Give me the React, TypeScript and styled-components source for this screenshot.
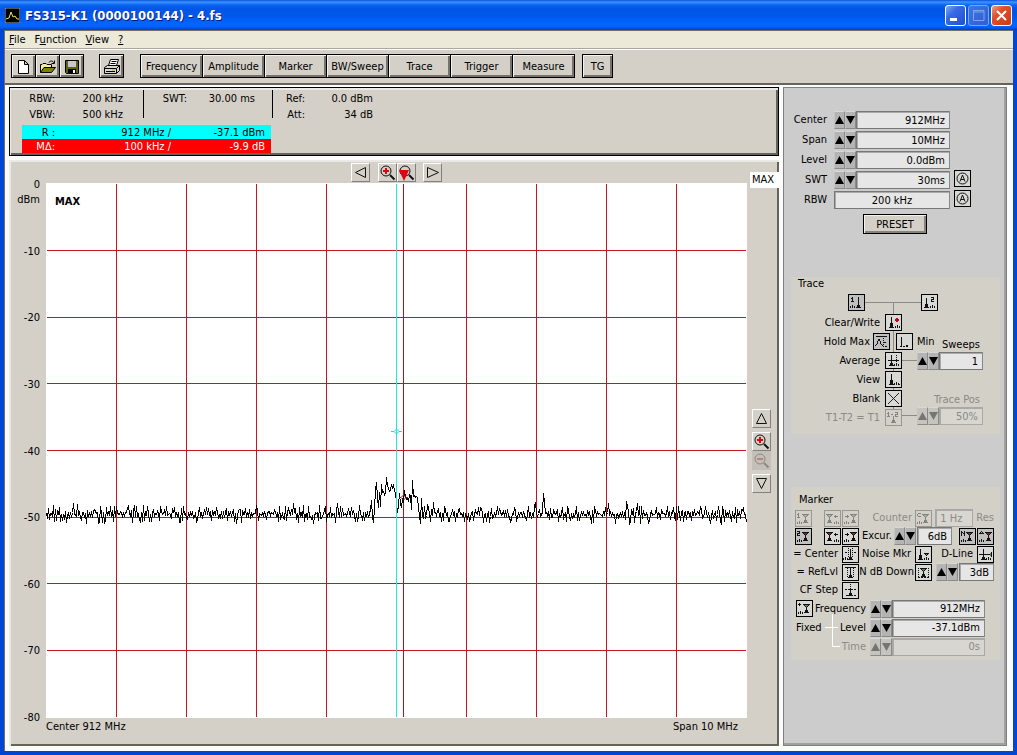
import React from "react";
import styled, { createGlobalStyle, css } from "styled-components";

const GlobalStyle = createGlobalStyle`
  * { box-sizing: border-box; }
  body { margin: 0; }
  body, button, input {
    font-family: "DejaVu Sans Condensed", Tahoma, "DejaVu Sans", sans-serif;
    font-size: 11px;
    line-height: 14px;
    color: #000;
  }
`;

const face = "#d4d0c8";

/* ---------- pixel icons ---------- */

const SPRITES: Record<string, string[]> = {
  peak: ["..#..", "..#..", "..#..", "..#..", ".###.", ".###.", "#####"],
  tall: [".#.", ".#.", ".#.", ".#.", ".#.", ".#.", "###", "###", "###"],
  mark: ["#######", ".#rrr#.", "..#r#..", "...#...", "...#...", "...#...", "..###..", "..###..", ".#####."],
  greenMark: ["#######", ".#ggg#.", "..#g#..", "...#...", "...#...", "...#...", "..###..", "..###..", ".#####."],
  floor: ["..#..", "#.#.#", "#.#.#"],
  one: [".#.", "##.", ".#.", ".#.", "###"],
  two: ["###", "..#", "###", "#..", "###"],
  left: [".#..", "####", ".#.."],
  right: ["..#.", "####", "..#."],
  n: ["#..#", "##.#", "#.##", "#..#", "#..#"],
  c: [".###", "#...", "#...", ".###"],
  delta: ["..#..", ".#.#.", "#####"],
  plus: [".#.", "###", ".#."],
  dot: [".rr.", "rrrr", "rrrr", ".rr."],
  gem: ["#####", ".#g#.", "..#.."],
  gemLeft: ["..#", ".g#", "#g#", ".g#", "..#"],
  bar: ["###########"],
  dash: ["##.##.##.##"],
  minus: ["##"],
  vline: ["#", "#", "#", "#", "#", "#", "#", "#", "#"],
  vdots: ["#", ".", "#", ".", "#", ".", "#", ".", "#"],
  hump: ["...##...", "...##...", "..#..#..", "..#..#..", "..#..#..", ".#....#.", "#......#"],
};

type Layer = [sprite: string, x: number, y: number];

const ICONS: Record<string, Layer[]> = {
  t1: [["one", 2, 2], ["peak", 7, 6], ["vline", 9, 2], ["floor", 1, 10]],
  t2: [["two", 9, 2], ["tall", 3, 3], ["peak", 2, 6], ["floor", 8, 10]],
  clear: [["tall", 4, 2], ["peak", 3, 6], ["dot", 9, 3], ["floor", 9, 10]],
  max: [["bar", 2, 2], ["hump", 1, 5], ["vdots", 9, 4], ["minus", 10, 8], ["minus", 11, 12]],
  min: [["vline", 4, 3], ["minus", 3, 12], ["minus", 9, 11], ["minus", 9, 12], ["minus", 6, 12]],
  avg: [["bar", 2, 7], ["peak", 3, 6], ["vdots", 10, 2], ["floor", 8, 10], ["vline", 5, 2]],
  view: [["tall", 4, 2], ["peak", 3, 6], ["floor", 8, 10], ["minus", 12, 12]],
  diff: [["one", 1, 2], ["minus", 5, 4], ["two", 9, 2], ["peak", 5, 6]],
  m1: [["one", 1, 2], ["greenMark", 6, 3], ["floor", 1, 10]],
  m2: [["two", 1, 2], ["mark", 6, 3], ["floor", 1, 10]],
  prevOff: [["greenMark", 1, 3], ["left", 9, 4], ["floor", 9, 10]],
  nextOff: [["greenMark", 7, 3], ["right", 2, 4], ["floor", 1, 10]],
  prev: [["mark", 1, 3], ["left", 9, 4], ["floor", 9, 10]],
  next: [["mark", 7, 3], ["right", 2, 4], ["floor", 1, 10]],
  count: [["c", 1, 2], ["greenMark", 6, 3], ["floor", 1, 10]],
  norm: [["n", 1, 2], ["mark", 6, 3], ["floor", 1, 10]],
  delta: [["delta", 1, 2], ["mark", 7, 3], ["floor", 1, 10]],
  center: [["peak", 5, 6], ["vline", 7, 2], ["minus", 2, 5], ["minus", 11, 5], ["vdots", 5, 1], ["vdots", 9, 1], ["floor", 0, 10]],
  noise: [["tall", 3, 2], ["peak", 2, 6], ["gem", 8, 6], ["floor", 8, 10]],
  dline: [["bar", 1, 7], ["peak", 3, 6], ["vline", 5, 2], ["gemLeft", 11, 5], ["floor", 8, 10]],
  ref: [["bar", 2, 2], ["vline", 7, 3], ["peak", 5, 6], ["vdots", 4, 3], ["vdots", 10, 3]],
  ndb: [["greenMark", 4, 3], ["vdots", 2, 3], ["vdots", 12, 3], ["dash", 2, 12]],
  step: [["peak", 5, 6], ["vdots", 7, 1], ["dash", 2, 6], ["minus", 3, 12], ["minus", 11, 12]],
  fixed: [["plus", 1, 2], ["greenMark", 6, 3], ["floor", 1, 10]],
};

const INK: Record<string, string> = { "#": "#111", r: "#c00020", g: "#20a050" };

function PixelIcon({ name }: { name: string }) {
  const paths: Record<string, string> = { "#": "", r: "", g: "" };
  ICONS[name].forEach(([sprite, ox, oy]) =>
    SPRITES[sprite].forEach((row, y) =>
      [...row].forEach((ch, x) => {
        if (ch !== ".") paths[ch] += `M${ox + x} ${oy + y}h1v1h-1z`;
      })
    )
  );
  return (
    <svg width="15" height="15" viewBox="0 0 15 15" shapeRendering="crispEdges" aria-hidden>
      {Object.keys(paths).map((k) => paths[k] && <path key={k} d={paths[k]} fill={INK[k]} />)}
    </svg>
  );
}

/* ---------- window frame ---------- */

const Window = styled.div`
  min-height: 100vh;
  display: flex;
  flex-direction: column;
  background: #0046d5;
`;

const TitleBar = styled.header`
  height: 30px;
  display: flex;
  align-items: center;
  gap: 5px;
  padding: 1px 5px 0;
  background: linear-gradient(#0a4fd8 0, #3d95ff 2px, #0a64f2 5px, #0055e5 9px, #0058ea 16px, #0066ff 24px, #0062f8 27px, #003ec0 30px);
`;

const Title = styled.h1`
  flex: 1;
  margin: 0;
  font-size: 13px;
  font-weight: bold;
  line-height: 16px;
  color: #fff;
  text-shadow: 1px 1px 0 #0a1883;
`;

const Caption = styled.div`
  display: flex;
  gap: 2px;
`;

const CaptionButton = styled.button<{ $kind: "min" | "max" | "close" }>`
  width: 21px;
  height: 21px;
  padding: 0;
  border: 1px solid ${(p) => (p.$kind === "max" ? "#7fa2ea" : "#fff")};
  border-radius: 3px;
  background: ${(p) =>
    p.$kind === "close"
      ? "linear-gradient(135deg, #f0a088, #e0502c 35%, #c83c14)"
      : p.$kind === "max"
      ? "linear-gradient(135deg, #3f76e4, #2a5fd8)"
      : "linear-gradient(135deg, #86a8f4, #3a6ae4 35%, #1f50d0)"};
  svg { display: block; }
`;

const Client = styled.div`
  flex: 1;
  display: flex;
  flex-direction: column;
  margin: 0 4px 4px;
  border-top: 1px solid #716f64;
  border-left: 1px solid #716f64;
  background: #fcfcfc;
`;

const MenuBar = styled.nav`
  display: flex;
  height: 18px;
  background: #ece9d8;
  border-bottom: 1px solid #aca899;
`;

const MenuItem = styled.button`
  padding: 1px 5px 0 4px;
  border: 0;
  background: none;
`;

const ToolBar = styled.div`
  display: flex;
  height: 36px;
  padding: 4px 6px;
  background: ${face};
  border-top: 1px solid #fff;
  border-bottom: 2px solid #66625c;
`;

const ToolGroup = styled.div<{ $gap: number }>`
  display: flex;
  margin-right: ${(p) => p.$gap}px;
`;

const ToolButton = styled.button<{ $width: number }>`
  width: ${(p) => p.$width}px;
  height: 24px;
  padding: 1px 0 0;
  border: 1px solid #000;
  background: ${face};
  box-shadow: inset 1px 1px 0 #f4f2ee, inset -2px -2px 0 #77736c;
  & + & { margin-left: -1px; }
  svg { display: block; margin: 0 auto; }
`;

/* ---------- main areas ---------- */

const Main = styled.main`
  flex: 1;
  display: flex;
  gap: 4px;
  padding: 2px 6px 5px 4px;
`;

const Work = styled.div`
  flex: 1;
  min-width: 0;
  display: flex;
  flex-direction: column;
  gap: 4px;
`;

const Info = styled.section`
  height: 69px;
  padding: 2px 12px 0;
  border: 1px solid #000;
  background: ${face};
  box-shadow: inset 1px 2px 0 #ebe9e5, inset -2px -2px 0 #66625c;
`;

const InfoCols = styled.div`
  display: flex;
  height: 35px;
`;

const InfoCol = styled.div<{ $label: number; $tail: number; $rule?: boolean }>`
  display: grid;
  grid-template-columns: ${(p) => p.$label}px 68px;
  grid-auto-rows: 16px;
  align-content: start;
  height: 28px;
  padding-right: ${(p) => p.$tail}px;
  border-right: ${(p) => (p.$rule ? "1px solid #000" : "0")};
  line-height: 17px;
  text-align: right;
  white-space: nowrap;
`;

const Readout = styled.div<{ $tone: "cyan" | "red" }>`
  display: grid;
  grid-template-columns: 33px 116px 94px;
  width: 249px;
  height: 14px;
  line-height: 15px;
  text-align: right;
  background: ${(p) => (p.$tone === "cyan" ? "#00ffff" : "#ff0000")};
  color: ${(p) => (p.$tone === "cyan" ? "#000" : "#fff")};
`;

const ChartPanel = styled.section`
  position: relative;
  flex: 1;
  display: grid;
  grid-template-columns: 37px minmax(0, 1fr) 32px;
  grid-template-rows: 23px minmax(360px, 1fr) 28px;
  background: ${face};
  box-shadow: inset 2px 2px 0 #ebe9e5, inset -2px -2px 0 #66625c;
`;

const ChartTools = styled.div`
  grid-column: 2;
  display: flex;
  justify-content: center;
  padding-top: 3px;
`;

const ChartButton = styled.button<{ $before?: number }>`
  width: 19px;
  height: 19px;
  padding: 0;
  margin-left: ${(p) => p.$before ?? 0}px;
  border: 1px solid;
  border-color: #fff #808080 #808080 #fff;
  background: ${face};
  svg { display: block; }
  &:disabled { background: #c4c0b8; border-color: #c4c0b8; }
`;

const Axis = styled.div`
  grid-area: 2 / 1;
  display: flex;
  flex-direction: column;
  justify-content: space-between;
  margin: -6px 0;
  padding-right: 6px;
  text-align: right;
  span { display: block; height: 14px; line-height: 15px; }
`;

const Plot = styled.div`
  grid-area: 2 / 2;
  position: relative;
  display: flex;
  background: #fff;
  svg { display: block; width: 100%; height: 0; min-height: 100%; }
`;

const PlotTag = styled.strong`
  position: absolute;
  left: 9px;
  top: 12px;
`;

const AxisFoot = styled.div`
  grid-area: 3 / 2;
  display: flex;
  justify-content: space-between;
  padding: 2px 9px 0 0;
`;

const ChartSide = styled.div`
  grid-area: 2 / 3;
  display: flex;
  flex-direction: column;
  justify-content: center;
  padding-left: 5px;
  gap: 4px;
`;

const ButtonStack = styled.div`
  display: flex;
  flex-direction: column;
`;

const MaxFlag = styled.div`
  position: absolute;
  right: -1px;
  top: 12px;
  width: 30px;
  height: 16px;
  padding: 1px 2px;
  background: #fff;
`;

/* ---------- side panel ---------- */

const Side = styled.aside`
  flex: none;
  width: 224px;
  display: flex;
  flex-direction: column;
  padding: 22px 7px 0;
  background: #ccc;
  border: 1px solid #808080;
  box-shadow: inset -2px -2px 0 #a0a0a0;
`;

const SettingRow = styled.div`
  display: flex;
  align-items: center;
  height: 20px;
`;

const Label = styled.label<{ $width?: number; $dim?: boolean; $left?: boolean }>`
  flex: none;
  width: ${(p) => (p.$width ? `${p.$width}px` : "auto")};
  text-align: ${(p) => (p.$left ? "left" : "right")};
  white-space: nowrap;
  color: ${(p) => (p.$dim ? "#8c8a85" : "#000")};
`;

const Field = styled.input<{ $width: number; $align?: string }>`
  flex: none;
  width: ${(p) => p.$width}px;
  height: 18px;
  padding: 0 4px;
  border: 1px solid;
  border-color: #777 #888 #777 #777;
  border-radius: 0;
  background: #e6e6e6;
  box-shadow: inset 1px 1px 0 #aaa;
  text-align: ${(p) => p.$align ?? "right"};
  &:disabled { background: #d8d6d0; color: #8c8a85; border-color: #aaa8a2; }
`;

const SpinPair = styled.span`
  display: flex;
  flex: none;
`;

const SpinButton = styled.button`
  width: 11px;
  height: 18px;
  padding: 0;
  border: 1px solid;
  border-color: #d8d8d8 #8a8a8a #8a8a8a #c4c4c4;
  background: #b4b4b4;
  svg { display: block; }
  &:disabled { background: #c6c4be; }
`;

const IconButton = styled.button<{ $pressed?: boolean }>`
  flex: none;
  width: 17px;
  height: 17px;
  padding: 0;
  border: 1px solid #000;
  background: #d8d8d4;
  ${(p) => p.$pressed && css`background: #c0c0c0;`}
  svg { display: block; }
  &:disabled { border-color: #99978f; background: ${face}; }
  &:disabled svg { opacity: 0.4; }
`;

const SettingGap = styled.span`
  flex: none;
  width: 7px;
`;

const AutoSlot = styled.span`
  padding-left: 4px;
`;

const Preset = styled.button`
  align-self: flex-start;
  width: 64px;
  height: 20px;
  margin: 4px 0 0 72px;
  padding: 1px 0 0;
  border: 1px solid #000;
  background: ${face};
  box-shadow: inset 1px 1px 0 #f4f2ee, inset -2px -2px 0 #88847c;
`;

const Group = styled.section<{ $top: number }>`
  position: relative;
  margin-top: ${(p) => p.$top}px;
  width: 209px;
  background: #d3d0c8;
`;

const GroupTitle = styled.h2<{ $indent: number; $top?: number }>`
  margin: 0;
  padding: ${(p) => p.$top ?? 0}px 0 0 ${(p) => p.$indent}px;
  font-size: 11px;
  font-weight: normal;
`;

const Wires = styled.svg`
  position: absolute;
  left: 0;
  top: 0;
`;

const Row = styled.div<{ $gap?: number }>`
  position: relative;
  display: flex;
  align-items: center;
  gap: ${(p) => p.$gap ?? 0}px;
`;

const TraceTabs = styled(Row)`
  gap: 56px;
  padding: 3px 0 0 57px;
`;

const TraceBody = styled.div`
  display: flex;
  padding: 3px 0 8px;
`;

const TraceModes = styled.div`
  flex: none;
  width: 126px;
  display: grid;
  grid-auto-rows: 17px;
  row-gap: 2px;
`;

const TraceValues = styled.div`
  position: relative;
  display: flex;
  flex-direction: column;
  padding-top: 24px;
`;

const ValueTitle = styled(Label)<{ $top?: number }>`
  margin-top: ${(p) => p.$top ?? 0}px;
  padding-right: 4px;
  width: 67px;
`;

const MinLabel = styled.span`
  width: 0;
  margin-left: 1px;
  white-space: nowrap;
`;

const MarkerGrid = styled.div`
  display: grid;
  grid-template-columns: 64px 73px 62px;
  grid-auto-rows: 18px;
  padding: 2px 0 0 4px;
`;

const MarkerCell = styled.div<{ $gap?: number; $start?: boolean }>`
  display: flex;
  align-items: center;
  justify-content: ${(p) => (p.$start ? "flex-start" : "flex-end")};
  gap: ${(p) => p.$gap ?? 1}px;
  padding-left: ${(p) => (p.$start ? 3 : 0)}px;
  white-space: nowrap;
`;

const Push = styled.span`
  flex: 1;
`;

const FixedRows = styled.div`
  position: relative;
  display: grid;
  grid-auto-rows: 19px;
  padding: 0 0 4px 5px;
`;

const SpinSlot = styled.span`
  flex: none;
  padding-left: 4px;
`;

/* ---------- pieces ---------- */

function Spin({ name, disabled }: { name: string; disabled?: boolean }) {
  const fill = disabled ? "#77756f" : "#000";
  return (
    <SpinPair>
      <SpinButton aria-label={`${name} up`} disabled={disabled}>
        <svg width="9" height="16" viewBox="0 0 9 16"><path d="M0 12L4.5 4L9 12z" fill={fill} /></svg>
      </SpinButton>
      <SpinButton aria-label={`${name} down`} disabled={disabled}>
        <svg width="9" height="16" viewBox="0 0 9 16"><path d="M0 4H9L4.5 12z" fill={fill} /></svg>
      </SpinButton>
    </SpinPair>
  );
}

function Icon({ name, label, disabled, pressed }: { name: string; label: string; disabled?: boolean; pressed?: boolean }) {
  return (
    <IconButton aria-label={label} disabled={disabled} $pressed={pressed}>
      <PixelIcon name={name} />
    </IconButton>
  );
}

function AutoButton({ label }: { label: string }) {
  return (
    <IconButton aria-label={label}>
      <svg width="15" height="15" viewBox="0 0 15 15" fill="none" stroke="#111">
        <circle cx="7.5" cy="7.5" r="5.5" />
        <path d="M5 10.5L7.5 4L10 10.5M6 8.5H9" />
      </svg>
    </IconButton>
  );
}

function Setting({ id, label, value, auto }: { id: string; label: string; value: string; auto?: boolean }) {
  return (
    <SettingRow>
      <Label htmlFor={id} $width={36}>{label}</Label>
      <SettingGap />
      <Spin name={label} />
      <Field id={id} $width={94} defaultValue={value} />
      {auto && <AutoSlot><AutoButton label={`${label} auto`} /></AutoSlot>}
    </SettingRow>
  );
}

function Lens({ sign, off }: { sign: "plus" | "minus" | "mark"; off?: boolean }) {
  const ink = off ? "#8c8a85" : "#111";
  const red = off ? "#c08080" : "#e00010";
  return (
    <svg width="17" height="17" viewBox="0 0 17 17" fill="none">
      <circle cx="7" cy="7" r="5" stroke={ink} />
      <path d="M11 11L15.5 15.5" stroke={ink} strokeWidth="2" />
      {sign === "plus" && <path d="M4 7H10M7 4V10" stroke={red} strokeWidth="2" />}
      {sign === "minus" && <path d="M4 7H10" stroke={red} strokeWidth="2" />}
      {sign === "mark" && <path d="M1 6H11L6 17z" fill={red} />}
    </svg>
  );
}

function Arrow({ d }: { d: string }) {
  return (
    <svg width="17" height="17" viewBox="0 0 17 17">
      <path d={d} fill="none" stroke="#111" />
    </svg>
  );
}

/* Sweep samples for the signal around the centre frequency, one per pixel column. */
const HUMP_START = 324;
const HUMP = [
  326, 317, 334, 339, 324, 307, 299, 314, 324, 309, 323, 301, 309, 308, 311, 309, 294, 302, 305, 308, 307, 301, 304,
  301, 308, 309, 320, 329, 322, 310, 321, 324, 315, 319, 307, 313, 316, 315, 318, 311, 312, 326, 297, 313, 312, 314,
  313, 314, 325, 332, 340, 315, 332, 335, 323,
];
const SPIKES: Record<number, number> = { 27: 320, 31: 321, 489: 319, 497: 310, 498: 319, 580: 318, 591: 320, 562: 320, 387: 319, 247: 320, 291: 320 };

function sweep() {
  let seed = 20117;
  const next = () => (seed = (seed * 16807) % 2147483647) / 2147483647;
  let d = "";
  let high = false;
  for (let x = 0; x <= 700; x++) {
    const flip = next() < 0.7;
    const size = next();
    if (flip) high = !high;
    let y = Math.round(high ? 330 - size * size * 8 : 331 + size * size * 9);
    y = SPIKES[x] ?? y;
    y = HUMP[x - HUMP_START] ?? y;
    d += `${x ? "L" : "M"}${x + 0.5} ${y + 0.5}`;
  }
  return d;
}

const SWEEP = sweep();
const GRID =
  [70, 140, 210, 280, 350, 420, 490, 560, 630].filter((x) => x !== 350).map((x) => `M${x + 0.5} 1V534`).join("") +
  [67, 134, 200, 267, 334, 400, 467].map((y) => `M1 ${y + 0.5}H700`).join("");

const Line = styled.path`
  fill: none;
  vector-effect: non-scaling-stroke;
`;

function Spectrum() {
  return (
    <svg viewBox="0 0 701 535" preserveAspectRatio="none" role="img" aria-label="Spectrum trace">
      <Line d={GRID} stroke="#c4142c" />
      <Line d="M357.5 1V534" stroke="#a81428" />
      <Line d={SWEEP} stroke="#000" shapeRendering="crispEdges" />
      <Line d="M350.5 1V534" stroke="#22e6e6" />
      <Line d="M345 248.500H348M353 248.500H356M348 248.500L350.500 246L353 248.500L350.500 251z" stroke="#22d6d6" />
      <Line d="M353 314.500H355M360 314.500H362M355 314.500L357.500 312L360 314.500L357.500 317z" stroke="#901020" />
    </svg>
  );
}

const MENUS: [string, string, string][] = [["", "F", "ile"], ["F", "u", "nction"], ["", "V", "iew"], ["", "?", ""]];

export default function App() {
  return (
    <>
      <GlobalStyle />
      <Window>
        <TitleBar>
          <svg width="15" height="15" viewBox="0 0 15 15" aria-hidden>
            <rect x="0" y="0" width="15" height="15" fill="#000" stroke="#aaa" />
            <path d="M1 11L4 10L6 4L8 9L10 8L12 11H14" fill="none" stroke="#e8e070" />
          </svg>
          <Title>FS315-K1 (0000100144) - 4.fs</Title>
          <Caption>
            <CaptionButton $kind="min" aria-label="Minimize">
              <svg width="19" height="19"><rect x="4" y="12" width="7" height="3" fill="#fff" /></svg>
            </CaptionButton>
            <CaptionButton $kind="max" aria-label="Maximize" disabled>
              <svg width="19" height="19"><path d="M4 4.5H15V14.5H4.5V5M4 6H15" fill="none" stroke="#7fa2ea" /></svg>
            </CaptionButton>
            <CaptionButton $kind="close" aria-label="Close">
              <svg width="19" height="19"><path d="M5 5L14 14M14 5L5 14" stroke="#fff" strokeWidth="2" /></svg>
            </CaptionButton>
          </Caption>
        </TitleBar>
        <Client>
          <MenuBar>
            {MENUS.map(([a, b, c]) => (
              <MenuItem key={a + b + c}>{a}<u>{b}</u>{c}</MenuItem>
            ))}
          </MenuBar>
          <ToolBar>
            <ToolGroup $gap={15}>
              <ToolButton $width={25} aria-label="New">
                <svg width="16" height="16" viewBox="0 0 16 16"><path d="M2.500 1.500H8.500L12.500 5.500V14.500H2.500zM8.500 1.500V5.500H12.500" fill="#fff" stroke="#000" /></svg>
              </ToolButton>
              <ToolButton $width={25} aria-label="Open">
                <svg width="16" height="16" viewBox="0 0 16 16">
                  <path d="M.5 13.500V5.500H2L3 4.500H6L7 5.500H11.500V8" fill="#f4f0a0" stroke="#000" />
                  <path d="M.5 13.500L4 8.500H15.500L11.500 13.500z" fill="#808000" stroke="#000" />
                  <path d="M9 3.500C10 1.500 13 1.500 14 4M14.500 1.500V4.500H11.500" fill="none" stroke="#000" />
                </svg>
              </ToolButton>
              <ToolButton $width={25} aria-label="Save">
                <svg width="16" height="16" viewBox="0 0 16 16">
                  <path d="M1.500 1.500H14.500V14.500H2.500L1.500 13.500z" fill="#606010" stroke="#000" />
                  <rect x="4" y="2" width="8" height="6" fill="#c8c8c8" /><rect x="4" y="10" width="8" height="5" fill="#000" />
                  <rect x="9" y="11" width="2" height="3" fill="#fff" />
                </svg>
              </ToolButton>
            </ToolGroup>
            <ToolGroup $gap={16}>
              <ToolButton $width={25} aria-label="Print">
                <svg width="18" height="18" viewBox="0 0 18 18" stroke="#000">
                  <path d="M5.500 7.500L7.500 1.500H15.500L13.500 7.500" fill="#fff" />
                  <path d="M8.500 3.500H13.500M7.500 5.500H12.500" fill="none" />
                  <path d="M1.500 9.500L4.500 7.500H16.500V12.500L13.500 15.500H1.500z" fill="#d8d8d8" />
                  <path d="M1.500 10.500H13.500V15M13.500 10.500L16.500 7.500M3 13.500H12" fill="none" />
                  <path d="M9 12H12" stroke="#c8b400" />
                </svg>
              </ToolButton>
            </ToolGroup>
            <ToolGroup $gap={7}>
              {["Frequency", "Amplitude", "Marker", "BW/Sweep", "Trace", "Trigger", "Measure"].map((t) => (
                <ToolButton key={t} $width={63}>{t}</ToolButton>
              ))}
            </ToolGroup>
            <ToolButton $width={31}>TG</ToolButton>
          </ToolBar>
          <Main>
            <Work>
              <Info>
                <InfoCols>
                  <InfoCol $label={33} $tail={20} $rule>
                    <span>RBW:</span><span>200 kHz</span><span>VBW:</span><span>500 kHz</span>
                  </InfoCol>
                  <InfoCol $label={43} $tail={17} $rule>
                    <span>SWT:</span><span>30.00 ms</span>
                  </InfoCol>
                  <InfoCol $label={32} $tail={0}>
                    <span>Ref:</span><span>0.0 dBm</span><span>Att:</span><span>34 dB</span>
                  </InfoCol>
                </InfoCols>
                <Readout $tone="cyan"><span>R :</span><span>912 MHz /</span><span>-37.1 dBm</span></Readout>
                <Readout $tone="red"><span>MΔ:</span><span>100 kHz /</span><span>-9.9 dB</span></Readout>
              </Info>
              <ChartPanel>
                <ChartTools>
                  <ChartButton aria-label="Pan left"><Arrow d="M13.500 3.500V13.500L3.500 8.500z" /></ChartButton>
                  <ChartButton $before={8} aria-label="Zoom in horizontally"><Lens sign="plus" /></ChartButton>
                  <ChartButton aria-label="Zoom to marker"><Lens sign="mark" /></ChartButton>
                  <ChartButton $before={7} aria-label="Pan right"><Arrow d="M3.500 3.500V13.500L14.500 8.500z" /></ChartButton>
                </ChartTools>
                <Axis>
                  <span>0<br />dBm</span>
                  {[-10, -20, -30, -40, -50, -60, -70, -80].map((v) => <span key={v}>{v}</span>)}
                </Axis>
                <Plot>
                  <Spectrum />
                  <PlotTag>MAX</PlotTag>
                </Plot>
                <ChartSide>
                  <ChartButton aria-label="Pan up"><Arrow d="M8.500 3.500L13.500 13.500H3.500z" /></ChartButton>
                  <ButtonStack>
                    <ChartButton aria-label="Zoom in vertically"><Lens sign="plus" /></ChartButton>
                    <ChartButton aria-label="Zoom out vertically" disabled><Lens sign="minus" off /></ChartButton>
                  </ButtonStack>
                  <ChartButton aria-label="Pan down"><Arrow d="M8.500 13.500L13.500 3.500H3.500z" /></ChartButton>
                </ChartSide>
                <AxisFoot><span>Center 912 MHz</span><span>Span 10 MHz</span></AxisFoot>
                <MaxFlag>MAX</MaxFlag>
              </ChartPanel>
            </Work>
            <Side>
              <Setting id="center" label="Center" value="912MHz" />
              <Setting id="span" label="Span" value="10MHz" />
              <Setting id="level" label="Level" value="0.0dBm" />
              <Setting id="swt" label="SWT" value="30ms" auto />
              <SettingRow>
                <Label htmlFor="rbw" $width={36}>RBW</Label>
                <SettingGap />
                <Field id="rbw" $width={116} $align="center" defaultValue="200 kHz" />
                <AutoSlot><AutoButton label="RBW auto" /></AutoSlot>
              </SettingRow>
              <Preset>PRESET</Preset>

              <Group $top={43}>
                <Wires width="209" height="157" fill="none" stroke="#8c8a85" shapeRendering="crispEdges" aria-hidden>
                  <path d="M74 25.500H130M102.500 26V140M111 83.500H126M111 138.500H126" />
                </Wires>
                <GroupTitle $indent={7}>Trace</GroupTitle>
                <TraceTabs>
                  <Icon name="t1" label="Trace 1" pressed />
                  <Icon name="t2" label="Trace 2" />
                </TraceTabs>
                <TraceBody>
                  <TraceModes>
                    <Row $gap={5}><Label as="span" $width={89}>Clear/Write</Label><Icon name="clear" label="Clear/Write" /></Row>
                    <Row $gap={3}>
                      <Label as="span" $width={79}>Hold Max</Label>
                      <Icon name="max" label="Hold Max" pressed />
                      <Push />
                      <Icon name="min" label="Hold Min" />
                      <MinLabel>Min</MinLabel>
                    </Row>
                    <Row $gap={5}><Label as="span" $width={89}>Average</Label><Icon name="avg" label="Average" /></Row>
                    <Row $gap={5}><Label as="span" $width={89}>View</Label><Icon name="view" label="View" /></Row>
                    <Row $gap={5}>
                      <Label as="span" $width={89}>Blank</Label>
                      <IconButton aria-label="Blank">
                        <svg width="15" height="15"><path d="M2 2L13 13M13 2L2 13" stroke="#222" /></svg>
                      </IconButton>
                    </Row>
                    <Row $gap={5}><Label as="span" $width={89} $dim>T1-T2 = T1</Label><Icon name="diff" label="T1-T2 = T1" disabled /></Row>
                  </TraceModes>
                  <TraceValues>
                    <ValueTitle htmlFor="sweeps">Sweeps</ValueTitle>
                    <Row><Spin name="Sweeps" /><Field id="sweeps" $width={44} defaultValue="1" /></Row>
                    <ValueTitle htmlFor="pos" $top={23} $dim>Trace Pos</ValueTitle>
                    <Row><Spin name="Trace Pos" disabled /><Field id="pos" $width={44} defaultValue="50%" disabled /></Row>
                  </TraceValues>
                </TraceBody>
              </Group>

              <Group $top={53}>
                <GroupTitle $indent={8} $top={6}>Marker</GroupTitle>
                <MarkerGrid>
                  <MarkerCell><Icon name="m1" label="Marker 1" disabled /><Push /><Icon name="prevOff" label="Previous peak 1" disabled /><Icon name="nextOff" label="Next peak 1" disabled /></MarkerCell>
                  <MarkerCell $gap={3}><Label as="span" $dim>Counter</Label><Icon name="count" label="Counter" disabled /></MarkerCell>
                  <MarkerCell $gap={3}><Field aria-label="Counter resolution" $width={38} $align="left" defaultValue="1 Hz" disabled /><Label as="span" $dim>Res</Label></MarkerCell>

                  <MarkerCell><Icon name="m2" label="Marker 2" pressed /><Push /><Icon name="prev" label="Previous peak" /><Icon name="next" label="Next peak" /></MarkerCell>
                  <MarkerCell $start><Label htmlFor="excur" $width={31} $left>Excur.</Label><Spin name="Excursion" /><Field id="excur" $width={35} defaultValue="6dB" /></MarkerCell>
                  <MarkerCell><Icon name="norm" label="Normal marker" pressed /><Icon name="delta" label="Delta marker" pressed /></MarkerCell>

                  <MarkerCell $gap={4}><Label as="span">= Center</Label><Icon name="center" label="Marker to center" /></MarkerCell>
                  <MarkerCell $gap={4}><Label as="span">Noise Mkr</Label><Icon name="noise" label="Noise marker" /></MarkerCell>
                  <MarkerCell $gap={4}><Label as="span">D-Line</Label><Icon name="dline" label="D-Line" /></MarkerCell>

                  <MarkerCell $gap={4}><Label as="span">= RefLvl</Label><Icon name="ref" label="Marker to reference level" /></MarkerCell>
                  <MarkerCell $gap={1}><Label htmlFor="ndb">N dB Down</Label><Icon name="ndb" label="N dB Down on" /></MarkerCell>
                  <MarkerCell><Spin name="N dB Down" /><Field id="ndb" $width={35} defaultValue="3dB" /></MarkerCell>

                  <MarkerCell $gap={4}><Label as="span">CF Step</Label><Icon name="step" label="CF Step" /></MarkerCell>
                </MarkerGrid>
                <FixedRows>
                  <Wires width="80" height="57" fill="none" stroke="#fff" shapeRendering="crispEdges" aria-hidden>
                    <path d="M34 28.500H47M41.500 15V47.500H49" />
                  </Wires>
                  <Row><Icon name="fixed" label="Fixed marker" /><Label htmlFor="mfreq" $width={53}>Frequency</Label><SpinSlot><Spin name="Frequency" /></SpinSlot><Field id="mfreq" $width={93} defaultValue="912MHz" /></Row>
                  <Row><Label as="span" $width={28} $left>Fixed</Label><Label htmlFor="mlevel" $width={42}>Level</Label><SpinSlot><Spin name="Level" /></SpinSlot><Field id="mlevel" $width={93} defaultValue="-37.1dBm" /></Row>
                  <Row><Label htmlFor="mtime" $width={70} $dim>Time</Label><SpinSlot><Spin name="Time" disabled /></SpinSlot><Field id="mtime" $width={93} defaultValue="0s" disabled /></Row>
                </FixedRows>
              </Group>
            </Side>
          </Main>
        </Client>
      </Window>
    </>
  );
}
